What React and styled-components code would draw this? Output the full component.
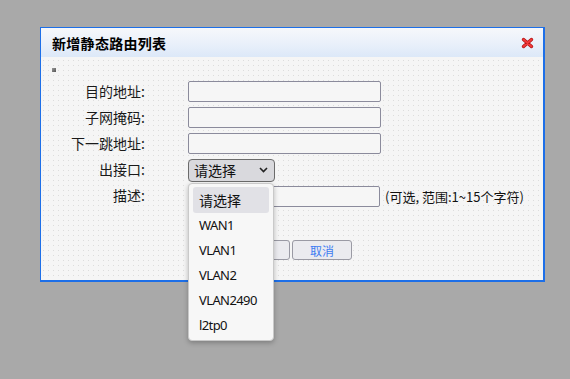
import React from 'react';
import styled, { createGlobalStyle } from 'styled-components';

const GlobalStyle = createGlobalStyle`
  html, body {
    margin: 0;
    padding: 0;
    background: #a9a9a9;
    font-family: "Noto Sans CJK SC", "Noto Sans", sans-serif;
  }
`;

const Page = styled.div`
  width: 570px;
  height: 379px;
  padding: 27px 0 0 40px;
  box-sizing: border-box;
  overflow: hidden;
`;

const Dialog = styled.div`
  width: 505px;
  height: 255px;
  box-sizing: border-box;
  border-style: solid;
  border-color: #1d6fe8;
  border-width: 1px 2px 2px 1px;
  display: flex;
  flex-direction: column;
  background-color: #f5f5f5;
  background-image: radial-gradient(circle, #dcdcdc 0.6px, transparent 0.9px);
  background-size: 5px 5px;
`;

const Header = styled.div`
  height: 29px;
  flex: none;
  display: flex;
  align-items: center;
  justify-content: space-between;
  padding: 0 9px 0 11px;
  background: linear-gradient(#f6f8fb, #e9f0fa 55%, #dce8f8);
`;

const Title = styled.div`
  font-size: 14px;
  font-weight: 700;
  color: #000;
  letter-spacing: 0.3px;
`;

const Body = styled.div`
  flex: 1;
  padding: 11px 0 0 11px;
  display: flex;
  flex-direction: column;
`;

const Marker = styled.div`
  width: 4px;
  height: 4px;
  background: linear-gradient(135deg, #999, #555);
`;

const Form = styled.div`
  margin-top: 7px;
  display: flex;
  flex-direction: column;
`;

const Row = styled.div`
  display: grid;
  grid-template-columns: 93px 193px auto;
  column-gap: 43px;
  align-items: center;
  height: ${(p) => p.$h || 25.5}px;
`;

const Label = styled.div`
  text-align: right;
  font-size: 14px;
  line-height: 18px;
  color: #1a1a1a;
  margin-top: -2px;
`;

const Input = styled.div`
  height: 21px;
  box-sizing: border-box;
  border: 1px solid #8b8b9c;
  border-radius: 2px;
  background: #f6f6f6;
`;

const SelectBox = styled.div`
  position: relative;
  width: 87px;
  height: 23px;
  box-sizing: border-box;
  border: 1px solid #6b6b6b;
  border-radius: 4px;
  background: #d9d9dd;
  display: flex;
  align-items: center;
  justify-content: space-between;
  padding: 0 6px 0 5px;
  font-size: 14px;
  color: #111;
`;

const Menu = styled.div`
  position: absolute;
  left: -1px;
  top: 23px;
  width: 86px;
  height: 158px;
  box-sizing: border-box;
  padding: 3px 4px;
  background: #f7f7f7;
  border: 1px solid #c9c9c9;
  border-radius: 4px;
  box-shadow: 0 2px 5px rgba(0, 0, 0, 0.25);
  z-index: 5;
`;

const Option = styled.div`
  height: 25px;
  display: flex;
  align-items: center;
  padding-left: 6px;
  border-radius: 3px;
  font-family: "Noto Sans", "Noto Sans CJK SC", sans-serif;
  font-size: 13px;
  letter-spacing: -0.6px;
  color: #111;
  background: ${(p) => (p.$active ? '#e1e1e6' : 'transparent')};
  ${(p) => p.$active && 'font-family: "Noto Sans CJK SC", sans-serif; font-size: 14px; letter-spacing: 0; height: 26px;'}
`;

const Hint = styled.div`
  font-size: 13px;
  color: #111;
  margin-left: -39px;
  white-space: nowrap;
`;

const Buttons = styled.div`
  margin: 31px 0 0 178px;
  display: flex;
  gap: 2px;
`;

const Button = styled.div`
  width: 60px;
  height: 20px;
  box-sizing: border-box;
  border: 1px solid #9a9aa4;
  border-radius: 3px;
  background: #ebebef;
  color: #3d7cf2;
  font-size: 12px;
  display: flex;
  align-items: center;
  justify-content: center;
`;

const CloseIcon = () => (
  <svg width="13" height="12" viewBox="0 0 13 12">
    <path d="M2.5 2.5 L10.5 9.5 M10.5 2.5 L2.5 9.5" stroke="#b01010" strokeWidth="3.4" strokeLinecap="round" />
    <path d="M2.5 2.5 L10.5 9.5 M10.5 2.5 L2.5 9.5" stroke="#f03a3a" strokeWidth="2" strokeLinecap="round" />
  </svg>
);

const Chevron = () => (
  <svg width="9" height="6" viewBox="0 0 9 6">
    <path d="M1 1 L4.5 4.5 L8 1" fill="none" stroke="#222" strokeWidth="1.6" />
  </svg>
);

const options = ['请选择', 'WAN1', 'VLAN1', 'VLAN2', 'VLAN2490', 'l2tp0'];

const App = () => {
  return (
    <>
      <GlobalStyle />
      <Page>
        <Dialog>
          <Header>
            <Title>新增静态路由列表</Title>
            <CloseIcon />
          </Header>
          <Body>
            <Marker />
            <Form>
              <Row>
                <Label>目的地址:</Label>
                <Input />
              </Row>
              <Row $h={26}>
                <Label>子网掩码:</Label>
                <Input />
              </Row>
              <Row $h={26}>
                <Label>下一跳地址:</Label>
                <Input />
              </Row>
              <Row $h={27}>
                <Label>出接口:</Label>
                <SelectBox>
                  <span>请选择</span>
                  <Chevron />
                  <Menu>
                    {options.map((o, i) => (
                      <Option key={o} $active={i === 0}>{o}</Option>
                    ))}
                  </Menu>
                </SelectBox>
              </Row>
              <Row>
                <Label>描述:</Label>
                <Input style={{ width: 192 }} />
                <Hint>(可选, 范围:1~15个字符)</Hint>
              </Row>
            </Form>
            <Buttons>
              <Button>确定</Button>
              <Button>取消</Button>
            </Buttons>
          </Body>
        </Dialog>
      </Page>
    </>
  );
};

export default App;
